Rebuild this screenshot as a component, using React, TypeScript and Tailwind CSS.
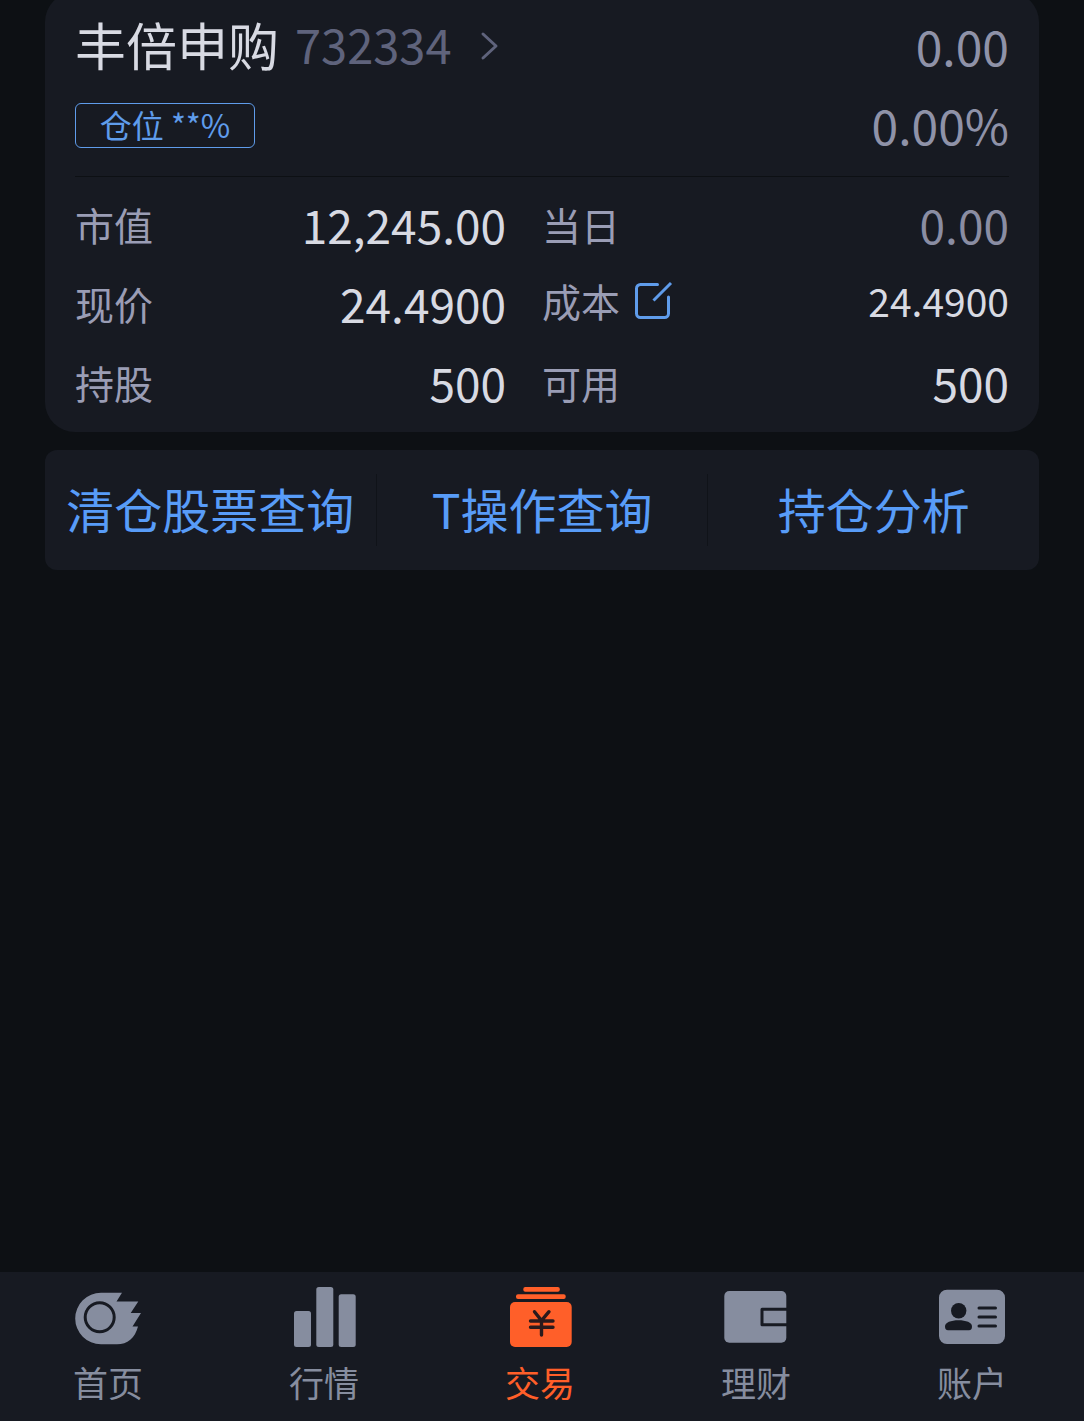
import type { ReactNode } from 'react'

const edit = (
  <svg className="w-10 h-10" viewBox="0 0 40 40" fill="none" stroke="#5f9ceb" strokeWidth="3" aria-hidden="true">
    <path d="M24.5 3.5H7.5a4 4 0 0 0-4 4v25a4 4 0 0 0 4 4h24a4 4 0 0 0 4-4V16" strokeLinecap="round" />
    <path d="M20.5 19.5L38 2" />
  </svg>
)

function Cell({ label, value, muted }: { label: string; value: string; muted?: boolean }) {
  return (
    <div className="flex items-center justify-between h-[79px]">
      <dt className="text-[39px] text-[#9a9db5]">{label}</dt>
      <dd className={muted ? 'text-[46px] text-[#8a8da3]' : 'text-[46px] text-[#d8dae3]'}>{value}</dd>
    </div>
  )
}

function NavItem({ label, active, children }: { label: string; active?: boolean; children: ReactNode }) {
  return (
    <a
      href="#"
      aria-current={active ? 'page' : undefined}
      className={`flex flex-1 flex-col items-center gap-2 pt-[13px] pb-[14px] ${active ? 'text-[#ff5f29]' : 'text-[#868d9f]'}`}
    >
      <svg className="w-[72px] h-16" viewBox="0 0 72 64" fill="currentColor" aria-hidden="true">
        {children}
      </svg>
      <span className="text-[35px] leading-[50px]">{label}</span>
    </a>
  )
}

export default function App() {
  return (
    <div className="min-h-screen flex flex-col overflow-hidden bg-[#0d1014] font-['Noto_Sans_CJK_SC',sans-serif]">
      <main className="flex-1 px-[45px]">
        <section className="-mt-2 rounded-[30px] bg-[#171a22] px-[30px] pt-[13px] pb-[10px]">
          <div className="flex items-center justify-between h-[79px]">
            <a href="#" className="flex items-center gap-4">
              <h1 className="text-[51px] text-[#d8dae3]">丰倍申购</h1>
              <span className="text-[47px] text-[#5f637c]">732334</span>
              <svg className="w-9 h-8" viewBox="0 0 36 32" fill="none" stroke="#5f637c" strokeWidth="3" aria-hidden="true">
                <path d="M15 5l13 12-13 12" strokeLinecap="round" strokeLinejoin="round" />
              </svg>
            </a>
            <span className="text-[48px] text-[#8f92a8]">0.00</span>
          </div>
          <div className="flex items-center justify-between h-[79px]">
            <span className="mt-1 flex items-center justify-center w-[180px] h-[45px] pb-1 rounded-md border border-[#5f9ceb] text-[32px] leading-none text-[#5f9ceb]">
              仓位 **%
            </span>
            <span className="text-[48px] text-[#8f92a8]">0.00%</span>
          </div>
          <hr className="mt-[13px] mb-2 border-[#0d1014]" />
          <dl className="grid grid-cols-[12fr_13fr] gap-x-9">
            <Cell label="市值" value="12,245.00" />
            <Cell label="当日" value="0.00" muted />
            <Cell label="现价" value="24.4900" />
            <div className="flex items-center justify-between h-[79px] pb-[6px]">
              <dt className="flex items-center gap-[13px] text-[39px] text-[#9a9db5]">
                成本
                <button type="button" aria-label="修改成本">{edit}</button>
              </dt>
              <dd className="text-[39px] text-[#d8dae3]">24.4900</dd>
            </div>
            <Cell label="持股" value="500" />
            <Cell label="可用" value="500" />
          </dl>
        </section>

        <div className="mt-[18px] flex items-center h-[120px] rounded-xl bg-[#171a22] text-[48px] leading-[68px] text-[#589cf8]">
          <button type="button" className="flex-1 whitespace-nowrap border-r border-[#101319] pb-1">清仓股票查询</button>
          <button type="button" className="flex-1 whitespace-nowrap border-r border-[#101319] pb-1">T操作查询</button>
          <button type="button" className="flex-1 whitespace-nowrap pb-1">持仓分析</button>
        </div>
      </main>

      <nav className="flex bg-[#171a22] pr-1">
        <NavItem label="首页">
          <path d="M29 7.7H50L44.5 16.5H66.3L58.7 28H69L60.5 41.5H66C63 53 55.5 59.3 45 59.3H29A25.8 25.8 0 0 1 29 7.7z" />
          <circle cx="27.7" cy="32.3" r="14.5" fill="none" stroke="#171a22" strokeWidth="3" />
        </NavItem>
        <NavItem label="行情">
          <rect x="6" y="26" width="17" height="36" rx="2.5" />
          <rect x="28.3" y="2" width="17" height="60" rx="2.5" />
          <rect x="50.7" y="9.3" width="17" height="52.7" rx="2.5" />
        </NavItem>
        <NavItem label="交易" active>
          <rect x="19.3" y="2" width="36.5" height="4.7" rx="2" />
          <rect x="12" y="9.3" width="49.7" height="4.7" rx="2" />
          <rect x="6" y="17" width="61.7" height="45" rx="5" />
          <path
            d="M30.5 26.7L37.5 35.5L45 26.7M37.5 35.5V50M26.5 36H49M26.5 42.3H49"
            fill="none"
            stroke="#2b1a1c"
            strokeWidth="3.4"
            strokeLinecap="round"
          />
        </NavItem>
        <NavItem label="理财">
          <rect x="4.3" y="6" width="62" height="51.7" rx="5" />
          <path d="M68 24.3H42V39.7H68" fill="none" stroke="#171a22" strokeWidth="3" strokeLinejoin="round" />
        </NavItem>
        <NavItem label="账户">
          <rect x="3" y="4.7" width="66" height="54.3" rx="8" />
          <g fill="#171a22">
            <circle cx="22.7" cy="25.7" r="7.7" />
            <path d="M9 41.5C9 37.5 15 35.3 22.5 35.3S36 37.5 36 41.5C36 44 35 45.3 33 45.3H12C10 45.3 9 44 9 41.5z" />
          </g>
          <path d="M43 23H59.5M43 32H59.5M43 41H59.5" stroke="#171a22" strokeWidth="3" strokeLinecap="round" />
        </NavItem>
      </nav>
    </div>
  )
}
